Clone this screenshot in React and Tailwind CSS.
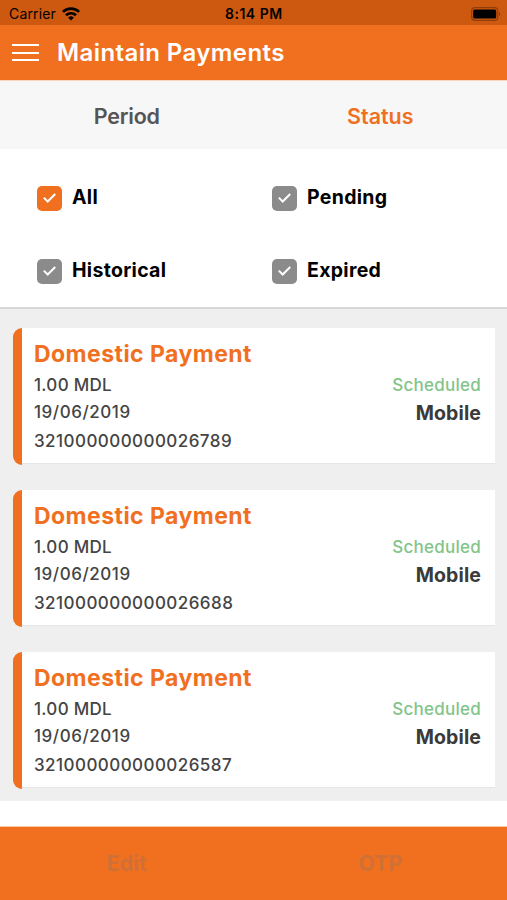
const filters = [
    { label: "All", active: true },
    { label: "Pending", active: false },
    { label: "Historical", active: false },
    { label: "Expired", active: false },
];

const payments = [
    { id: 1, account: "321000000000026789" },
    { id: 2, account: "321000000000026688" },
    { id: 3, account: "321000000000026587" },
];

function StatusBar() {
    return (
        <div className="relative h-[25px] bg-[#cd5810] flex items-center justify-between pl-[9px] pr-[6px] pt-[2px] text-black">
            <div className="flex items-center gap-[6px]">
                <span className="text-[14px] leading-none tracking-[0.15px]">Carrier</span>
                <svg className="w-[18px] h-[14px]" viewBox="0 0 18 14" fill="none" stroke="currentColor" strokeWidth="2.7">
                    <path d="M0.9 4.9a11.5 11.5 0 0 1 16.2 0" />
                    <path d="M4 8.3a7.1 7.1 0 0 1 10 0" />
                    <path d="M9 13.5L6.2 10.7a4 4 0 0 1 5.6 0z" fill="currentColor" stroke="none" />
                </svg>
            </div>
            <span className="absolute left-[225px] top-[7px] text-[14px] leading-none tracking-[0.5px] font-semibold">8:14 PM</span>
            <svg className="w-[30px] h-[14px]" viewBox="0 0 30 14">
                <rect x="0.7" y="0.7" width="26" height="12.6" rx="3.4" fill="none" stroke="#8f3d0b" strokeWidth="1.2" />
                <rect x="2.2" y="2.4" width="23" height="9.2" rx="1.5" fill="#000" />
                <path d="M28 4.8c1.8 0.7 1.8 3.7 0 4.4z" fill="#8f3d0b" />
            </svg>
        </div>
    );
}

function Checkbox({ label, active }) {
    return (
        <label className="flex items-center h-[73px]">
            <span
                className={`w-[25px] h-[25px] mt-px rounded-[5px] flex items-center justify-center ${active ? "bg-[#f1701f]" : "bg-[#8b8b8b]"}`}
            >
                <svg className="w-[13px] h-[10px]" viewBox="0 0 13 10" fill="none" stroke="#fff" strokeWidth="2">
                    <path d="M0.8 4.6l3.9 3.9L12.2 1" />
                </svg>
            </span>
            <span className="ml-[10px] text-[19.5px] tracking-[0.3px] font-bold text-black">{label}</span>
        </label>
    );
}

function PaymentCard({ account }) {
    return (
        <div className="flex h-[137px]">
            <div className="w-[9px] bg-[#f1701f] rounded-l-[9px]" />
            <div className="flex-1 h-[136px] bg-white border-b border-[#e6e6e6] pl-[12px] pr-[14px] pt-[11px] text-[#444]">
                <h2 className="text-[23px] leading-[30px] tracking-[0.45px] font-bold text-[#f1701f]">Domestic Payment</h2>
                <div className="flex justify-between mt-[3px] text-[17px] font-medium">
                    <div>
                        <p className="leading-[27px] tracking-[0.3px]">1.00 MDL</p>
                        <p className="leading-[27px] tracking-[0.55px]">19/06/2019</p>
                        <p className="leading-[31px] tracking-[0.45px]">{account}</p>
                    </div>
                    <div className="text-right">
                        <p className="leading-[27px] tracking-[0.25px] text-[#83c48a]">Scheduled</p>
                        <p className="text-[19.5px] leading-[29px] tracking-[0.1px] font-bold text-[#3a3a3a]">Mobile</p>
                    </div>
                </div>
            </div>
        </div>
    );
}

export default function App() {
    return (
        <div className="w-[507px] h-[900px] flex flex-col bg-white overflow-hidden font-['Inter',sans-serif]">
            <StatusBar />

            <header className="h-[55px] bg-[#f1701f] flex items-center pl-[12px]">
                <div className="w-[27px] flex flex-col gap-[5.5px]">
                    <div className="h-[2px] bg-white" />
                    <div className="h-[2px] bg-white" />
                    <div className="h-[2px] bg-white" />
                </div>
                <h1 className="ml-[18px] text-[24px] tracking-[0.4px] font-semibold text-white">Maintain Payments</h1>
            </header>

            <nav className="h-[69px] bg-[#f7f7f7] border-t border-[#fbd5bb] grid grid-cols-2 items-center text-center text-[21.5px] font-semibold pb-[1px] pt-[4px]">
                <span className="text-[#555] tracking-[-0.2px]">Period</span>
                <span className="text-[#f1701f]">Status</span>
            </nav>

            <section className="h-[160px] grid grid-cols-[235px_1fr] content-start pl-[37px] pt-[12px] border-b-2 border-[#d6d6d6]">
                {filters.map((filter) => (
                    <Checkbox key={filter.label} label={filter.label} active={filter.active} />
                ))}
            </section>

            <main className="h-[492px] bg-[#efefef] pl-[13px] pr-[12px] pt-[19px] flex flex-col gap-[25px]">
                {payments.map((payment) => (
                    <PaymentCard key={payment.id} account={payment.account} />
                ))}
            </main>

            <footer className="mt-auto h-[74px] bg-[#f1701f] border-t border-[#f9c8a5] grid grid-cols-2 items-center text-center text-[21.5px] font-bold text-[#cf7037]">
                <span>Edit</span>
                <span>OTP</span>
            </footer>
        </div>
    );
}
